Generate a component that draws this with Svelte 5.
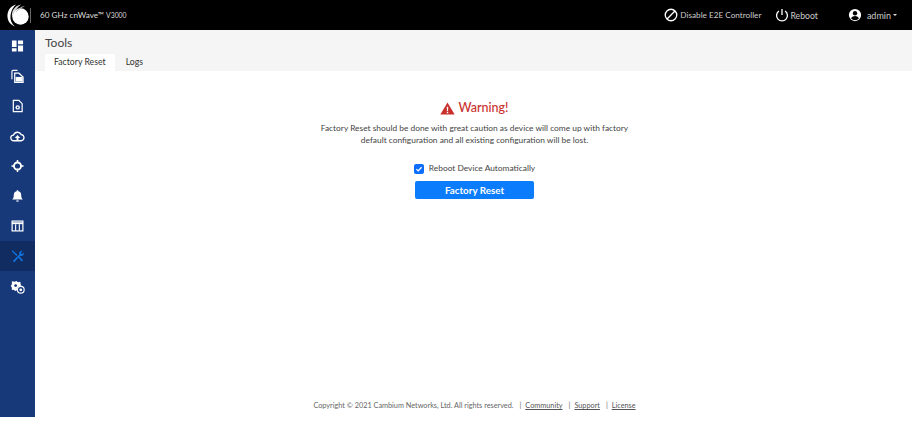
<script>
  const text1 = 'Factory Reset should be done with great caution as device will come up with factory';
  const text2 = 'default configuration and all existing configuration will be lost.';
</script>

<div class="shell">
  <header class="top">
    <svg class="logo" viewBox="0 0 26 26" width="26" height="26" aria-hidden="true">
      <circle cx="15.5" cy="14.5" r="8.2" fill="#fff"/>
      <path d="M11 2.5C5.5 4 2 9 2.5 15c.4 4.6 3.400 8 7.500 9.500C6.500 21.500 5 18 5.500 13.500 6 9 8 5 11 2.500z" fill="#fff"/>
      <path d="M16 2.500C11 3.500 7.800 7 7 11.500c-.3 2 0 3.500.5 5 .2-4.500 2.500-9 8.500-14z" fill="#d8d8d8"/>
      <path d="M20 4c-4.500.5-8 3-9.500 7 2.500-3 5.500-5 9.500-7z" fill="#bbb"/>
    </svg>
    <span class="divider"></span>
    <span class="brand">60 GHz cnWave™ <small>V3000</small></span>
    <nav class="actions">
      <span class="action a1">
        <svg viewBox="0 0 16 16" width="14" height="14" aria-hidden="true"><circle cx="8" cy="8" r="6.600" fill="none" stroke="#fff" stroke-width="1.500"/><path d="M3.500 12.500l9-9" stroke="#fff" stroke-width="1.500"/></svg>
        Disable E2E Controller
      </span>
      <span class="action a2">
        <svg viewBox="0 0 16 16" width="14" height="14" aria-hidden="true"><path d="M4.500 3.500a6.200 6.200 0 1 0 7 0" fill="none" stroke="#fff" stroke-width="1.500"/><path d="M8 1v7" stroke="#fff" stroke-width="1.500"/></svg>
        Reboot
      </span>
      <span class="action a3">
        <svg viewBox="0 0 16 16" width="14" height="14" aria-hidden="true"><circle cx="8" cy="8" r="7" fill="#fff"/><circle cx="8" cy="6" r="2.500" fill="#000"/><path d="M3.500 12c1-2 2.800-2.800 4.500-2.800s3.500.8 4.500 2.800A6 6 0 0 1 8 14a6 6 0 0 1-4.500-2z" fill="#000"/></svg>
        admin
        <i class="caret"></i>
      </span>
    </nav>
  </header>

  <div class="body">
    <aside class="side">
      <div class="item">
        <svg viewBox="0 0 14 14" aria-hidden="true"><path d="M1 1h5v7H1zM7.500 1H13v4H7.500zM1 9.500h5V13H1zM7.500 6.500H13V13H7.500z" fill="#fff"/></svg>
      </div>
      <div class="item">
        <svg viewBox="0 0 14 14" aria-hidden="true"><path d="M1 10.500V2.200C1 1.500 1.500 1 2.200 1H7" fill="none" stroke="#fff" stroke-width="1.200"/><path d="M4 4h4.500L13 8v5.800H4z" fill="none" stroke="#fff" stroke-width="1.300"/><path d="M8 8h4.500v5H5V8z" fill="#fff"/></svg>
      </div>
      <div class="item">
        <svg viewBox="0 0 14 14" aria-hidden="true"><path d="M2.500 1h6l3.500 3.500V13h-9.500z" fill="none" stroke="#fff" stroke-width="1.300"/><circle cx="7.200" cy="8.500" r="2.400" fill="#fff"/><circle cx="7.200" cy="8.500" r=".9" fill="#17397a"/></svg>
      </div>
      <div class="item wide">
        <svg viewBox="0 0 16 14" aria-hidden="true"><path d="M4 11.500a3 3 0 0 1-.3-6A4.500 4.500 0 0 1 12 5a3.300 3.300 0 0 1 .3 6.500z" fill="none" stroke="#fff" stroke-width="1.400"/><path d="M8 5.500l3 3H9V11H7V8.500H5z" fill="#fff"/></svg>
      </div>
      <div class="item">
        <svg viewBox="0 0 14 14" aria-hidden="true"><circle cx="7" cy="7" r="3.800" fill="none" stroke="#fff" stroke-width="2"/><path d="M7 .5v3M7 10.500v3M.5 7h3M10.500 7h3" stroke="#fff" stroke-width="1.600"/></svg>
      </div>
      <div class="item">
        <svg viewBox="0 0 14 14" aria-hidden="true"><path d="M7 .8c.7 0 1 .5 1 1 2 .5 3 2 3 4 0 2.500.5 3.700 1.800 5H1.200C2.500 9.500 3 8.300 3 5.800c0-2 1-3.500 3-4 0-.5.300-1 1-1zM5.500 11.800h3A1.500 1.500 0 0 1 7 13.300a1.500 1.500 0 0 1-1.500-1.500z" fill="#fff"/></svg>
      </div>
      <div class="item">
        <svg viewBox="0 0 14 14" aria-hidden="true"><rect x="1.200" y="1.700" width="11.600" height="10.600" fill="none" stroke="#fff" stroke-width="1.300"/><path d="M1 3h12v2H1z" fill="#fff"/><path d="M5 5v7M9 5v7" stroke="#fff" stroke-width="1.200"/></svg>
      </div>
      <div class="item active">
        <svg viewBox="0 0 14 14" aria-hidden="true"><path d="M1.500 2.500l1-1 4.500 4.300L5.800 7zM3 2.800L1.500 2.500 1 1l1-.2z" fill="#1273de"/><path d="M2 12.500L9 5.500C8.600 4 9 2.800 10 2c.8-.6 1.800-.7 2.500-.5L10.800 3.200l.2 1.300 1.300.3L13.800 3.200c.3 1.200 0 2.200-.8 3-.9.8-2 1-3 .6l-6.500 7z" fill="#1273de"/><path d="M8 8.800l1.300-1.200 3.700 3.900-1.400 1.400z" fill="#1273de"/></svg>
      </div>
      <div class="item wide">
        <svg viewBox="0 0 16 16" aria-hidden="true"><path d="M2 2.500l3 .5 2-1 1.500 1.500L11 3l.3 2.500 1 1.200-1.700.8A4 4 0 0 0 7.500 12l-2 .8-1.500-1.300-2 .2L2 9 .8 7.500 2 5.500z" fill="#fff"/><circle cx="6" cy="7" r="1.500" fill="#17397a"/><circle cx="11.500" cy="11.500" r="3.600" fill="none" stroke="#fff" stroke-width="1.200"/><circle cx="11.500" cy="11.500" r="1.500" fill="#fff"/></svg>
      </div>
    </aside>

    <main class="main">
      <div class="head">
        <h1>Tools</h1>
        <div class="tabs">
          <span class="tab on">Factory Reset</span>
          <span class="tab logs">Logs</span>
        </div>
      </div>
      <section class="content">
        <h2>
          <svg viewBox="0 0 16 14" width="15" height="13" aria-hidden="true"><path d="M8 .5L15.700 13.500H.3z" fill="#c9302c"/><path d="M7.200 5h1.600l-.2 4.800H7.400zM7.200 10.600h1.600v1.500H7.200z" fill="#fff"/></svg>
          Warning!
        </h2>
        <p>{text1}<br />{text2}</p>
        <label class="check"><span class="box"><svg viewBox="0 0 10 10" width="8" height="8" aria-hidden="true"><path d="M1.800 5.200l2.200 2.200 4.200-4.600" fill="none" stroke="#fff" stroke-width="1.600"/></svg></span>Reboot Device Automatically</label>
        <button type="button">Factory Reset</button>
      </section>
      <footer class="foot">
        <span>Copyright © 2021 Cambium Networks, Ltd. All rights reserved.</span>
        <span class="sep">|</span><a href="#c">Community</a>
        <span class="sep">|</span><a href="#s">Support</a>
        <span class="sep">|</span><a href="#l">License</a>
      </footer>
    </main>
  </div>
</div>

<style>
  :global(body) { margin: 0; background: #fff; }
  .shell {
    width: 912px;
    height: 417px;
    display: flex;
    flex-direction: column;
    font-family: Lato, "Open Sans", sans-serif;
    color: #444;
    overflow: hidden;
  }
  .top {
    height: 30px;
    flex: none;
    background: #000;
    color: #ddd;
    display: flex;
    align-items: center;
    padding-left: 5px;
    box-sizing: border-box;
  }
  .logo { flex: none; }
  .divider { width: 1px; height: 15px; background: #666; margin-left: -1px; }
  .brand { font-size: 8.200px; margin-left: 9px; color: #ddd; }
  .brand small { font-size: 6.800px; }
  .actions { margin-left: auto; display: flex; align-items: center; font-size: 8.200px; color: #ccc; }
  .action { display: flex; align-items: center; gap: 2px; }
  .a1 { margin-right: 14px; }
  .a2 { margin-right: 30px; font-size: 8.700px; gap: 1px; }
  .a3 { margin-right: 15px; gap: 5px; font-size: 9px; }
  .caret { border: 2.500px solid transparent; border-top-color: #ddd; border-bottom: 0; margin-left: -3px; }
  .body { flex: 1; display: flex; min-height: 0; }
  .side { width: 35px; flex: none; background: #17397a; display: flex; flex-direction: column; padding-top: 1px; }
  .item { height: 30px; display: flex; align-items: center; justify-content: center; }
  .item svg { width: 13px; height: 14px; }
  .item.wide svg { width: 15px; height: 15px; }
  .item.active { background: #102c60; }
  .main { flex: 1; display: flex; flex-direction: column; min-width: 0; }
  .head { background: #f5f5f5; height: 41px; flex: none; padding: 6px 0 0 10px; box-sizing: border-box; }
  h1 { margin: 0; font-size: 12px; font-weight: 400; line-height: 14px; color: #444; }
  .tabs { display: flex; margin-top: 4px; }
  .tab { font-size: 8.700px; line-height: 16px; height: 17px; padding: 0 9px; color: #333; }
  .tab.on { background: #fff; }
  .tab.logs { padding: 0 11px; }
  .content { flex: 1; display: flex; flex-direction: column; align-items: center; padding: 29px 0 0 2px; }
  h2 { margin: 0; font-size: 12.500px; font-weight: 500; color: #c9302c; line-height: 16px; display: flex; align-items: center; gap: 3px; }
  p { margin: 6px 0 0; font-size: 8.400px; line-height: 12px; text-align: center; color: #444; }
  .check { display: flex; align-items: center; gap: 5px; font-size: 8.400px; margin-top: 16px; color: #444; line-height: 13px; }
  .box { width: 10px; height: 10px; border-radius: 2px; background: #0d6efd; display: flex; align-items: center; justify-content: center; }
  button {
    margin-top: 6px;
    width: 119px;
    height: 18px;
    border: 0;
    border-radius: 2px;
    background: #0b7cfb;
    color: #fff;
    font: 700 9.800px Lato, "Open Sans", sans-serif;
    padding: 0;
  }
  .foot { flex: none; height: 16px; display: flex; justify-content: center; font-size: 7.300px; color: #666; padding-left: 2px; }
  .foot a { color: #555; }
  .sep { margin: 0 4px 0 6px; }
</style>
